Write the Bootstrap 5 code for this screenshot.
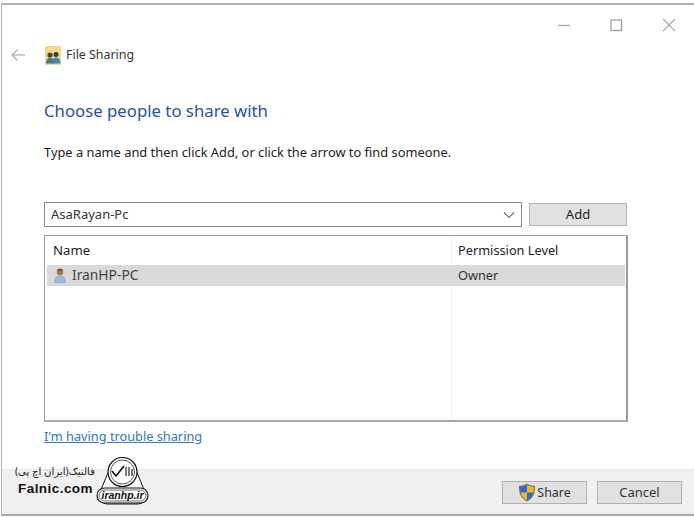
<!DOCTYPE html>
<html lang="en">
<head>
<meta charset="utf-8">
<title>File Sharing</title>
<link href="https://cdn.jsdelivr.net/npm/bootstrap@5.3.0/dist/css/bootstrap.min.css" rel="stylesheet">
<style>
html,body{height:100%;background:#fff;margin:0;overflow:hidden}
body{font-family:"Noto Sans","Open Sans",sans-serif;font-size:13px;color:#222;padding:3px 0 1px 1px}
.win{height:513px;width:693px;border-top:2px solid #b0b0b0;border-left:1px solid #b4b4b4;border-bottom:2px solid #a8a8a8;position:relative}
.ctrls{height:40px;padding-right:18px;gap:39px;padding-top:0}
.hdr{height:20px;padding-left:8px}
.hdr .ttl{font-size:12.4px;color:#333;margin-left:5px}
.backic{margin-right:19px}
.main{padding:0 0 0 42px;width:628px}
.h-blue{color:#2b52a2;font-size:16.75px;font-weight:400;margin:33px 0 0;line-height:26px}
.instr{font-size:12.85px;color:#222;margin:19px 0 0;line-height:18px}
.combo{height:25px;width:478px;border:1px solid #8c8c8c;padding:0 6px;font-size:13px;color:#333}
.pick{margin-top:41px;gap:7px}
.addb{width:98px;height:23px;background:#e1e1e1;border:1px solid #b4b4b4;border-radius:0;color:#222;font-size:13px;padding:0;line-height:21px}
.lst{margin-top:8px;height:187px;width:584px;border:1px solid #a0a0a0;border-right:2px solid #9a9a9a;border-bottom:2px solid #a6a6a6;padding:0 1px 0 2px}
.cola{width:404px;padding-left:6px;display:flex;align-items:center;font-size:13.2px}
.colb{flex:1;padding-left:6px;display:flex;align-items:center;border-left:1px solid #eef0f5;font-size:12.75px}
.lhead{height:29px;color:#222}
.lrow{height:21px;background:#d9d9d9;color:#444}
.lrow .cola{font-size:13.8px;gap:5px}
.lrow .colb{border-left-color:#d9d9d9;color:#333}
.lfill{flex:1}
.lfill .colb{height:100%}
.hlp{display:block;margin-top:5px;line-height:19px;color:#2a78c8;font-size:12.75px;text-decoration:underline}
.foot{position:absolute;left:0;right:0;bottom:0;height:45px;background:#f0f0f0;border-top:1px solid #e6e6e6;padding:11px 12px 0 0;gap:10px}
.fbtn{width:85px;height:23px;background:#e1e1e1;border:1px solid #b0b0b0;border-radius:0;color:#333;font-size:13px;padding:0;line-height:21px}
.fbtn .shr{font-size:12.4px;margin-left:1px}
.mark-fa{position:absolute;left:15px;top:452px;width:135px;height:54px}
.fa-txt{position:absolute;left:0;width:78px;text-align:center;top:6px;font-family:"Noto Sans","DejaVu Sans",sans-serif;font-size:10.2px;line-height:16px;color:#222;white-space:nowrap}
.fa-en{position:absolute;left:1px;top:23px;font-family:"Liberation Sans",sans-serif;font-weight:700;font-size:13.5px;line-height:18px;color:#111;letter-spacing:.45px}
.fa-svg{position:absolute;left:78px;top:-2px}
</style>
</head>
<body>
<div class="win">
  <div class="ctrls d-flex justify-content-end align-items-center">
    <svg width="14" height="14" viewBox="0 0 14 14"><path d="M1 7.500H13" stroke="#a8a8a8" stroke-width="1.300"/></svg>
    <svg width="13" height="13" viewBox="0 0 13 13"><rect x="1" y="1" width="10.500" height="10.500" fill="none" stroke="#a0a0a0" stroke-width="1.300"/></svg>
    <svg width="14" height="14" viewBox="0 0 14 14"><path d="M1 1L13 13M13 1L1 13" stroke="#a8a8a8" stroke-width="1.100"/></svg>
  </div>
  <div class="hdr d-flex align-items-center">
    <svg class="backic" width="16" height="14" viewBox="0 0 16 14"><path d="M15 7H2M7.500 1.500L2 7l5.500 5.500" fill="none" stroke="#bdbdbd" stroke-width="1.700"/></svg>
    <svg width="16" height="19" viewBox="0 0 16 19">
      <rect x="0" y="0" width="16" height="19" fill="#f3d98a"/>
      <circle cx="5" cy="9" r="2.600" fill="#5b3f2c"/>
      <circle cx="11" cy="8.500" r="2.500" fill="#3f3a36"/>
      <path d="M1 17.500c0-4 2-5.500 4-5.500s4.500 1.500 4.500 5.500z" fill="#3b7f7a"/>
      <path d="M6.500 17.500c0-4 2-5.800 4.500-5.800s4.500 1.800 4.500 5.800z" fill="#3f86b5"/>
    </svg>
    <span class="ttl">File Sharing</span>
  </div>
  <div class="main">
    <h1 class="h-blue">Choose people to share with</h1>
    <p class="instr">Type a name and then click Add, or click the arrow to find someone.</p>
    <div class="pick d-flex align-items-center">
      <div class="combo d-flex align-items-center justify-content-between">
        <span>AsaRayan-Pc</span>
        <svg width="12" height="8" viewBox="0 0 12 8"><path d="M1 1.500l5 5 5-5" fill="none" stroke="#777" stroke-width="1.200"/></svg>
      </div>
      <button type="button" class="btn addb">Add</button>
    </div>
    <div class="lst d-flex flex-column">
      <div class="lhead d-flex"><div class="cola">Name</div><div class="colb">Permission Level</div></div>
      <div class="lrow d-flex">
        <div class="cola">
          <svg width="14" height="17" viewBox="0 0 14 17">
            <circle cx="7" cy="5" r="3.300" fill="#a5764f"/>
            <path d="M4 3.500C5 1 9 1 10 3.500z" fill="#5a4030"/>
            <path d="M1.500 15.500c0-4.500 2.500-6.500 5.500-6.500s5.500 2 5.500 6.500z" fill="#9dbbe0" stroke="#7c97bb" stroke-width=".6"/>
          </svg>
          <span>IranHP-PC</span>
        </div>
        <div class="colb">Owner</div>
      </div>
      <div class="lfill d-flex"><div class="cola"></div><div class="colb"></div></div>
    </div>
    <a class="hlp" href="#">I'm having trouble sharing</a>
  </div>
  <div class="foot d-flex justify-content-end">
    <button type="button" class="btn fbtn d-flex align-items-center justify-content-center">
      <svg width="18" height="19" viewBox="0 0 18 19"><path d="M9 1C6.500 2.800 4 3.200 1.500 3.200c0 6 .8 11.500 7.500 14.800 6.700-3.300 7.500-8.800 7.500-14.800C14 3.200 11.500 2.800 9 1z" fill="#f2b91e" stroke="#39496b" stroke-width=".8"/><path d="M9 1.500C6.500 3 4 3.500 1.900 3.500c0 2 .1 4 .6 6H9zM9 9.500v8c3.500-1.800 5.500-4.500 6.500-8z" fill="#2a6fc4"/></svg>
      <span class="shr">Share</span>
    </button>
    <button type="button" class="btn fbtn">Cancel</button>
  </div>
  <div class="mark-fa">
    <div class="fa-txt" dir="rtl">فالنیک(ایران اچ پی)</div>
    <div class="fa-en">Falnic.com</div>
    <svg class="fa-svg" width="55" height="54" viewBox="0 0 55 54">
      <path d="M17 8C21 1 34 1 38 8L50 37C52 45 48 49 42 49H13C7 49 3 45 5 37Z" fill="#fff" stroke="#111" stroke-width="1"/>
      <circle cx="27.500" cy="17" r="14.500" fill="#fff" stroke="#111" stroke-width="1.200"/>
      <circle cx="27.500" cy="17" r="12" fill="none" stroke="#111" stroke-width=".7"/>
      <path d="M17 16l4 5 8-10" fill="none" stroke="#111" stroke-width="1.700"/>
      <path d="M31 12v9M34 12v9M37 14v7" stroke="#111" stroke-width="1.100"/>
      <rect x="2" y="33" width="51" height="15" rx="7.500" fill="#fff" stroke="#111" stroke-width="1.100"/>
      <rect x="4" y="35" width="47" height="11" rx="5.500" fill="none" stroke="#111" stroke-width=".6"/>
      <text x="27.500" y="44" text-anchor="middle" font-family="Liberation Sans, sans-serif" font-size="10.500" font-weight="700" font-style="italic" fill="#111">iranhp.ir</text>
    </svg>
  </div>
</div>
<script src="https://cdn.jsdelivr.net/npm/bootstrap@5.3.0/dist/js/bootstrap.bundle.min.js"></script>
</body>
</html>
